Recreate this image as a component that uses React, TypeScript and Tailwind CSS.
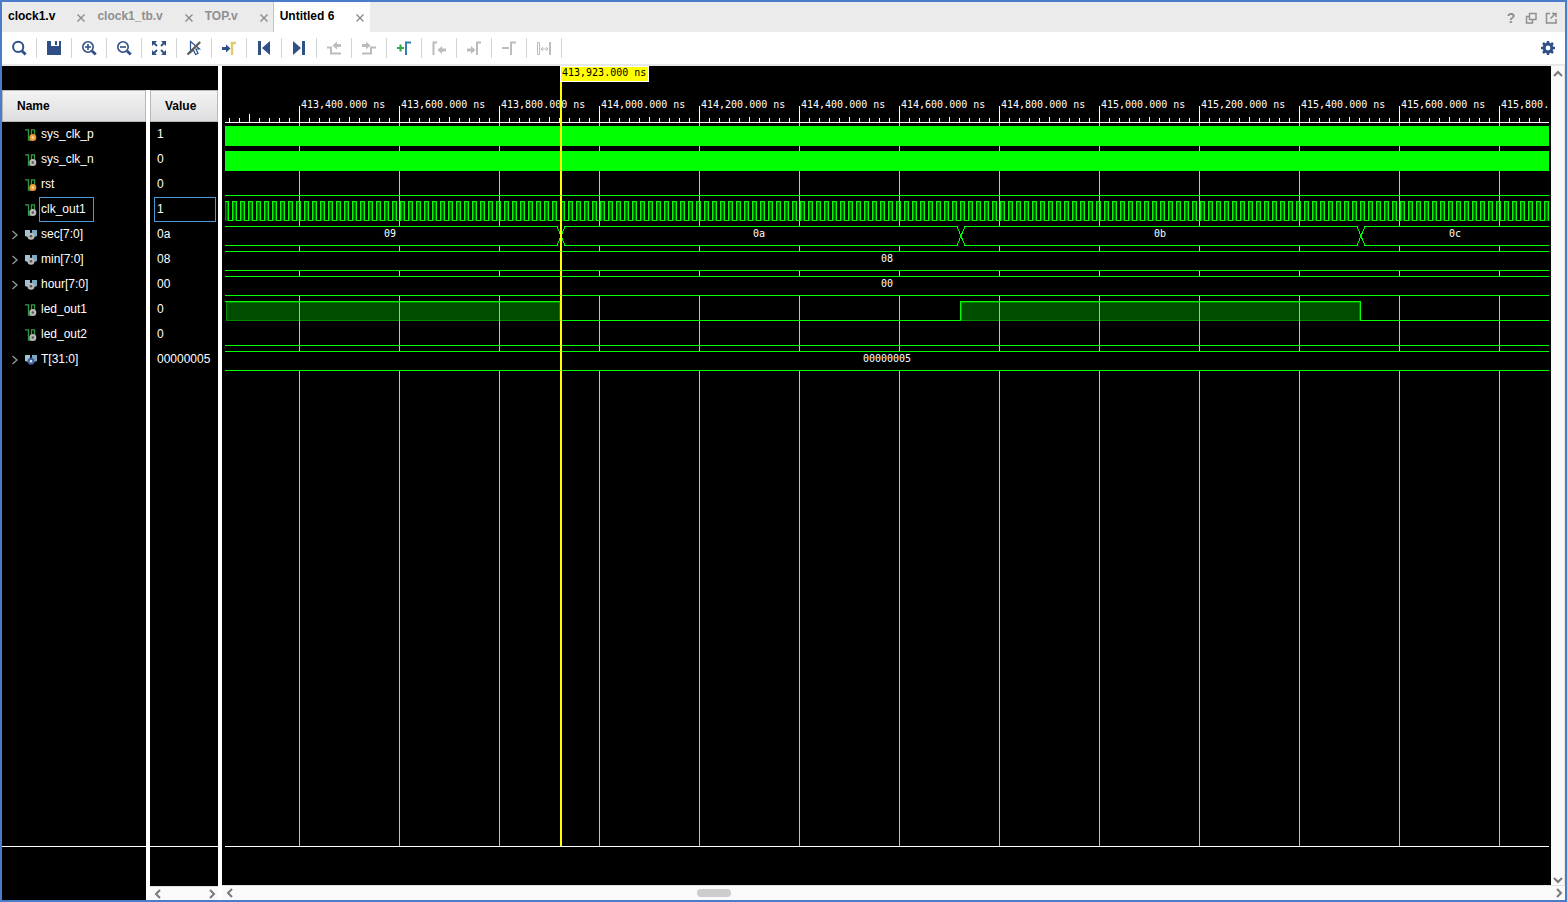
import React, { useState } from "react";
import clsx from "clsx";

const NAVY = "#2f4f86";
const MUTED = "#bcbcbc";
const GREEN = "#00ff00";

const TABS = ["clock1.v", "clock1_tb.v", "TOP.v", "Untitled 6"];

type Signal = {
  name: string;
  value: string;
  kind: "input" | "wire" | "bus" | "const";
};

const SIGNALS: Signal[] = [
  { name: "sys_clk_p", value: "1", kind: "input" },
  { name: "sys_clk_n", value: "0", kind: "wire" },
  { name: "rst", value: "0", kind: "input" },
  { name: "clk_out1", value: "1", kind: "wire" },
  { name: "sec[7:0]", value: "0a", kind: "bus" },
  { name: "min[7:0]", value: "08", kind: "bus" },
  { name: "hour[7:0]", value: "00", kind: "bus" },
  { name: "led_out1", value: "0", kind: "wire" },
  { name: "led_out2", value: "0", kind: "wire" },
  { name: "T[31:0]", value: "00000005", kind: "const" },
];

/* Arrow heads shared by the toolbar icons */
const arrowRight = (x: number, y: number) =>
  `M${x} ${y - 1.5}h4v-2.5l4.5 4l-4.5 4v-2.5h-4z`;
const arrowLeft = (x: number, y: number) =>
  `M${x} ${y - 1.5}h-4v-2.5l-4.5 4l4.5 4v-2.5h4z`;

const TOOLS: { label: string; disabled?: boolean; icon: React.ReactNode }[] = [
  {
    label: "Search",
    icon: (
      <g stroke={NAVY} fill="none">
        <circle cx="7.2" cy="6.9" r="5.1" strokeWidth="2" />
        <path d="M10.9 10.7L14.6 14.4" strokeWidth="2.8" />
      </g>
    ),
  },
  {
    label: "Save",
    icon: (
      <path d="M1 1h4v5h8v-5h2v14h-14zM9 1h2v4h-2z" fill={NAVY} />
    ),
  },
  {
    label: "Zoom In",
    icon: (
      <g stroke={NAVY} fill="none">
        <circle cx="7" cy="7" r="5.2" strokeWidth="1.6" />
        <path d="M4 7h6M7 4v6" strokeWidth="1.6" />
        <path d="M11 11L14.8 14.6" strokeWidth="2.8" />
      </g>
    ),
  },
  {
    label: "Zoom Out",
    icon: (
      <g stroke={NAVY} fill="none">
        <circle cx="7" cy="7" r="5.2" strokeWidth="1.6" />
        <path d="M4 7h6" strokeWidth="1.6" />
        <path d="M11 11L14.8 14.6" strokeWidth="2.8" />
      </g>
    ),
  },
  {
    label: "Zoom Fit",
    icon: (
      <g fill={NAVY} stroke={NAVY}>
        <path
          d="M1 1h5l-5 5zM15 1h-5l5 5zM1 15h5l-5 -5zM15 15h-5l5 -5z"
          stroke="none"
        />
        <path
          d="M2 2l4 4M14 2l-4 4M2 14l4 -4M14 14l-4 -4"
          strokeWidth="1.8"
        />
      </g>
    ),
  },
  {
    label: "Select Mode",
    icon: (
      <g fill="none">
        <path
          d="M4.5 1.5v11l3 -2.5l2 4.5l2.5 -1l-2 -4.5h3.5z"
          stroke={NAVY}
          strokeWidth="1.2"
        />
        <path d="M1.5 14.5L14.2 2" stroke="#595959" strokeWidth="2.2" />
      </g>
    ),
  },
  {
    label: "Go to Cursor",
    icon: (
      <>
        <path d={arrowRight(1, 8.5)} fill={NAVY} />
        <path d="M11 15V3H15" fill="none" stroke="#e3c968" strokeWidth="2.4" />
      </>
    ),
  },
  {
    label: "Go to Time 0",
    icon: <path d="M2 1h3v14h-3zM14 1v14l-8 -7z" fill={NAVY} />,
  },
  {
    label: "Go to Last Time",
    icon: <path d="M11 1h3v14h-3zM2 1v14l8 -7z" fill={NAVY} />,
  },
  {
    label: "Previous Transition",
    disabled: true,
    icon: (
      <>
        <path
          d="M1 7.5H5V13.5H15"
          fill="none"
          stroke={MUTED}
          strokeWidth="2"
        />
        <path d={arrowLeft(15, 5.5)} fill={MUTED} />
      </>
    ),
  },
  {
    label: "Next Transition",
    disabled: true,
    icon: (
      <>
        <path
          d="M1 13.5H10V7.5H15"
          fill="none"
          stroke={MUTED}
          strokeWidth="2"
        />
        <path d={arrowRight(1, 5.5)} fill={MUTED} />
      </>
    ),
  },
  {
    label: "Add Marker",
    icon: (
      <g fill="none" strokeWidth="2">
        <path d="M1 8h7M4.5 4.5v7" stroke="#35a845" />
        <path d="M10 15V2.5H15" stroke="#2e7fb5" />
      </g>
    ),
  },
  {
    label: "Previous Marker",
    disabled: true,
    icon: (
      <>
        <path d="M2.5 15V2.5H6" fill="none" stroke={MUTED} strokeWidth="2" />
        <path d={arrowLeft(15, 10)} fill={MUTED} />
      </>
    ),
  },
  {
    label: "Next Marker",
    disabled: true,
    icon: (
      <>
        <path d={arrowRight(1, 10)} fill={MUTED} />
        <path d="M11 15V2.5H15" fill="none" stroke={MUTED} strokeWidth="2" />
      </>
    ),
  },
  {
    label: "Remove Marker",
    disabled: true,
    icon: (
      <g fill="none" stroke={MUTED} strokeWidth="2">
        <path d="M1 8h7" />
        <path d="M10 15V2.5H15" />
      </g>
    ),
  },
  {
    label: "Swap Cursors",
    disabled: true,
    icon: (
      <g fill="none" stroke={MUTED}>
        <path d="M1.5 2.5h2v12h-2z" />
        <path d="M14 2v13" strokeWidth="2" />
        <path d="M5 9h7M7 7l-2 2l2 2M10 7l2 2l-2 2" />
      </g>
    ),
  },
];

function SignalIcon({ kind }: { kind: Signal["kind"] }) {
  const dot =
    kind === "input" ? "#f29a33" : kind === "const" ? "#3f5f9c" : "#b9b9b9";

  if (kind === "bus" || kind === "const") {
    return (
      <svg width="12" height="12" viewBox="0 0 12 12" className="shrink-0">
        <path d="M0 1h5v6l-2 1l-3 -1z" fill="#9cc3d8" />
        <path d="M12 1h-5v6l2 1l3 -1z" fill="#7fa9c2" />
        <circle cx="6" cy="7.2" r="3.5" fill={dot} />
        <circle cx="6" cy="7.2" r="1.3" fill={kind === "bus" ? "#555" : "#dfe6f2"} />
      </svg>
    );
  }
  return (
    <svg width="12" height="12" viewBox="0 0 12 12" className="shrink-0">
      <path
        d="M0 .8H3.5V11H6.5V.8H9.5V6"
        fill="none"
        stroke="#2f9a48"
        strokeWidth="1.3"
      />
      <circle cx="7.8" cy="8.5" r="3.5" fill={dot} />
      <circle
        cx="7.8"
        cy="8.5"
        r="1.2"
        fill={kind === "input" ? "#ffe0b0" : "#555"}
      />
    </svg>
  );
}

function Chevron({ d, color = "#7a7a7a" }: { d: string; color?: string }) {
  return (
    <svg width="10" height="10" viewBox="0 0 10 10">
      <path d={d} fill="none" stroke={color} strokeWidth="2" />
    </svg>
  );
}

const LEFT = "M7 1L3 5L7 9";
const RIGHT = "M3 1L7 5L3 9";
const UP = "M1 7L5 3L9 7";
const DOWN = "M1 3L5 7L9 3";

function TabBar() {
  const [active, setActive] = useState("Untitled 6");
  return (
    <div className="flex h-[30px] shrink-0 bg-[#ebebeb]">
      {TABS.map((tab) => (
        <div
          key={tab}
          className={clsx(
            "flex items-center pl-1.5 pr-1.5",
            tab === active && "bg-white shadow-[-1px_0_0_#c4c4c4]"
          )}
        >
          <button
            onClick={() => setActive(tab)}
            className={clsx(
              "pb-0.5 font-bold",
              tab === active || tab === "clock1.v"
                ? "text-black"
                : "text-[#8f8f8f]"
            )}
          >
            {tab}
          </button>
          <button aria-label={`Close ${tab}`} className="ml-[22px] pt-0.5">
            <svg width="8" height="8" viewBox="0 0 8 8">
              <path d="M.5 .5L7.5 7.5M7.5 .5L.5 7.5" stroke="#8a8a8a" strokeWidth="1.4" />
            </svg>
          </button>
        </div>
      ))}
      <div className="ml-auto flex items-center gap-2 pr-2 pt-0.5 text-[#8e8e8e]">
        <button aria-label="Help" className="w-3 text-sm font-bold">
          ?
        </button>
        <button aria-label="Restore">
          <svg width="12" height="12" viewBox="0 0 12 12" fill="none" stroke="currentColor">
            <path d="M4.5 1.5h6.5v6h-6.5zM4 4.5H1.5v6.5h6V8" strokeWidth="1.4" />
          </svg>
        </button>
        <button aria-label="Float">
          <svg width="12" height="12" viewBox="0 0 12 12" fill="none" stroke="currentColor">
            <path d="M5 1.5H1.5v9.5h9.5V7M5.5 6.5L10 2M7 1.5h4V5" strokeWidth="1.5" />
          </svg>
        </button>
      </div>
    </div>
  );
}

function Toolbar() {
  return (
    <div className="flex h-[34px] shrink-0 items-center border-b-2 border-[#e8e8e8] bg-white">
      {TOOLS.map((tool) => (
        <button
          key={tool.label}
          aria-label={tool.label}
          title={tool.label}
          disabled={tool.disabled}
          className="flex h-5 w-[35px] items-center justify-center border-r border-[#d4d4d4]"
        >
          <svg width="16" height="16" viewBox="0 0 16 16">
            {tool.icon}
          </svg>
        </button>
      ))}
      <button aria-label="Settings" className="ml-auto pr-2.5">
        <svg width="14" height="14" viewBox="0 0 14 14" fill="none" stroke={NAVY}>
          <circle cx="7" cy="7" r="3.9" strokeWidth="3" />
          <path
            d="M7 0v2.5M7 11.5V14M0 7h2.5M11.5 7H14M2 2l2 2M10 10l2 2M12 2l-2 2M4 10l-2 2"
            strokeWidth="2.6"
          />
        </svg>
      </button>
    </div>
  );
}

function SignalPane() {
  const [selected, setSelected] = useState("clk_out1");
  return (
    <div className="flex w-[216px] shrink-0 flex-col bg-black pt-6 text-white">
      <table className="w-full table-fixed border-separate border-spacing-0 text-left">
        <thead>
          <tr className="h-8 text-black">
            <th className="w-[144px] p-0">
              <div className="flex h-8 items-center border border-[#b8b8b8] bg-linear-to-b from-[#f3f3f3] to-[#dedee0] pl-3.5">
                Name
              </div>
            </th>
            <th className="bg-white p-0 pl-1">
              <div className="flex h-8 items-center border border-[#b8b8b8] bg-linear-to-b from-[#f3f3f3] to-[#dedee0] pl-3.5">
                Value
              </div>
            </th>
          </tr>
        </thead>
        <tbody>
          {SIGNALS.map((signal) => {
            const isBus = signal.kind === "bus" || signal.kind === "const";
            const box =
              signal.name === selected
                ? "border-[#4a9ad8]"
                : "border-transparent";
            return (
              <tr
                key={signal.name}
                className="h-[25px]"
                onClick={() => setSelected(signal.name)}
              >
                <td className="p-0">
                  <div className="flex items-center pl-2">
                    <span className="mr-[5px] flex w-2.5">
                      {isBus && (
                        <button aria-label={`Expand ${signal.name}`}>
                          <svg width="10" height="10" viewBox="0 0 10 10">
                            <path d="M2.5 1L7 5L2.5 9" fill="none" stroke="#9a9a9a" strokeWidth="1.3" />
                          </svg>
                        </button>
                      )}
                    </span>
                    <SignalIcon kind={signal.kind} />
                    <span
                      className={clsx(
                        "ml-0.5 flex h-[25px] items-center border pb-0.5 pl-px pr-[7px]",
                        box
                      )}
                    >
                      {signal.name}
                    </span>
                  </div>
                </td>
                <td className="border-l-4 border-white p-0">
                  <div
                    className={clsx(
                      "ml-1 mr-0.5 flex h-[25px] items-center border pb-0.5 pl-0.5",
                      box
                    )}
                  >
                    {signal.value}
                  </div>
                </td>
              </tr>
            );
          })}
        </tbody>
      </table>
      {/* Empty rows */}
      <div className="flex flex-1">
        <div className="w-[144px] border-b border-white" />
        <div className="w-1 bg-white" />
        <div className="flex-1 border-b border-white" />
      </div>
      <div className="flex h-[53px] shrink-0">
        <div className="w-[144px]" />
        <div className="flex flex-1 flex-col justify-end border-l-4 border-white">
          <div className="flex h-3.5 items-center justify-between border-t border-[#e0e0e0] bg-[#fafafa] pl-[3px] pr-px">
            <button aria-label="Scroll values left">
              <Chevron d={LEFT} />
            </button>
            <button aria-label="Scroll values right">
              <Chevron d={RIGHT} />
            </button>
          </div>
        </div>
      </div>
    </div>
  );
}

/* Ruler: 200 ns per 100 px, first label at x = 74 */
const RULER_Y = 56;
const MAJORS = Array.from({ length: 13 }, (_, i) => ({
  x: 74 + i * 100,
  label: `${(413400 + i * 200).toLocaleString("en-US")}.000 ns`,
}));
const MINORS = Array.from({ length: 132 }, (_, i) => 4 + i * 10);

/* A bus hides the grid lines between its rails */
function Bus({ y, value }: { y: number; value?: string }) {
  return (
    <>
      <rect x="0" y={y} width="100%" height="20" fill="#000" />
      <rect x="0" y={y} width="100%" height="1" fill={GREEN} />
      <rect x="0" y={y + 19} width="100%" height="1" fill={GREEN} />
      {value && (
        <text x="50%" y={y + 11} textAnchor="middle">
          {value}
        </text>
      )}
    </>
  );
}

function Pulse({ from, to, y }: { from: number; to: number; y: number }) {
  return (
    <>
      <rect x={from} y={y} width={to - from} height="20" fill={GREEN} fillOpacity="0.3" />
      <rect
        x={from + 0.5}
        y={y + 1.5}
        width={to - from - 1}
        height="18"
        fill="none"
        stroke={GREEN}
        strokeOpacity="0.35"
      />
    </>
  );
}

function Waveform() {
  return (
    <svg
      className="min-h-0 w-full flex-1 border-b border-white font-['DejaVu_Sans_Mono','Liberation_Mono',monospace] text-[10px]"
      fill="#fff"
      shapeRendering="crispEdges"
    >
      <defs>
        <pattern id="clk" x="7" y="135" width="8" height="20" patternUnits="userSpaceOnUse">
          <rect x="0" y="0" width="5" height="20" fill={GREEN} fillOpacity="0.3" />
          <path d="M1.5 1V19M3.5 1V19M1 1.5H4" stroke={GREEN} strokeOpacity="0.35" />
          <path d="M.5 20V.5H4.5V19.5H8" fill="none" stroke={GREEN} />
        </pattern>
      </defs>

      {/* Time ruler and grid */}
      {MAJORS.map(({ x, label }) => (
        <g key={x}>
          <rect x={x} y={RULER_Y} width="1" height="100%" fill="#c0c0c0" />
          <rect x={x} y="40" width="1" height="17" />
          <text x={x + 2} y="42">
            {label}
          </text>
        </g>
      ))}
      {MINORS.map((x) => (
        <rect key={x} x={x} y={x % 100 === 24 ? 51 : 52} width="1" height="5" />
      ))}
      <rect x="24" y="48" width="1" height="8" />
      <rect x="0" y={RULER_Y} width="100%" height="1" />

      {/* sys_clk_p, sys_clk_n, rst */}
      <rect x="0" y="60" width="100%" height="20" fill={GREEN} />
      <rect x="0" y="85" width="100%" height="20" fill={GREEN} />
      <rect x="0" y="129" width="100%" height="1" fill={GREEN} />

      {/* clk_out1 */}
      <rect x="0" y="135" width="100%" height="20" fill="url(#clk)" />

      {/* sec[7:0] */}
      <Bus y={160} />
      {[336, 736, 1136].map((x) => (
        <g key={x}>
          <rect x={x - 4} y="160" width="8" height="20" fill="#000" />
          <path
            d={`M${x - 5} 160.5h1L${x + 4} 179.5h1M${x - 5} 179.5h1L${x + 4} 160.5h1`}
            fill="none"
            stroke={GREEN}
          />
        </g>
      ))}
      <g textAnchor="middle">
        <text x="165" y="171">09</text>
        <text x="534" y="171">0a</text>
        <text x="935" y="171">0b</text>
        <text x="1230" y="171">0c</text>
      </g>

      {/* min[7:0], hour[7:0] */}
      <Bus y={185} value="08" />
      <Bus y={210} value="00" />

      {/* led_out1 */}
      <Pulse from={1} to={335} y={235} />
      <Pulse from={736} to={1135} y={235} />
      <path
        d="M0 235.5H335.5V254.5H735.5V235.5H1135.5V254.5H3000"
        fill="none"
        stroke={GREEN}
      />

      {/* led_out2, T[31:0] */}
      <rect x="0" y="279" width="100%" height="1" fill={GREEN} />
      <Bus y={285} value="00000005" />

      {/* Cursor */}
      <rect x="335" y="0" width="2" height="100%" fill="#ffff00" />
      <rect x="335.5" y=".5" width="88" height="15" fill="#ffff00" stroke="#fff" />
      <text x="337" y="10" fill="#000">
        413,923.000 ns
      </text>
    </svg>
  );
}

export default function App() {
  return (
    <div className="flex h-screen flex-col overflow-hidden border-2 border-[#4a7cc9] bg-white font-['Liberation_Sans',Arial,sans-serif] text-xs">
      <TabBar />
      <Toolbar />
      <div className="flex min-h-0 flex-1 gap-1">
        <SignalPane />
        <div className="flex min-w-0 flex-1 flex-col">
          <div className="flex min-h-0 flex-1">
            <div className="flex min-w-0 flex-1 flex-col bg-black pb-[38px] pl-[3px] pr-0.5">
              <Waveform />
            </div>
            <div className="flex w-3.5 shrink-0 flex-col items-center justify-between border-r border-[#e4e4e4] bg-[#fafafa] pt-[3px]">
              <button aria-label="Scroll up">
                <Chevron d={UP} />
              </button>
              <button aria-label="Scroll down">
                <Chevron d={DOWN} />
              </button>
            </div>
          </div>
          <div className="flex h-[15px] shrink-0 items-center border-t border-[#e0e0e0] bg-[#fafafa] pl-[3px] pr-px">
            <button aria-label="Scroll left">
              <Chevron d={LEFT} />
            </button>
            <div className="flex flex-1">
              <div className="w-[35%]" />
              <div className="h-2 w-[34px] rounded-full bg-[#cdcdcd]" />
            </div>
            <button aria-label="Scroll right">
              <Chevron d={RIGHT} />
            </button>
          </div>
        </div>
      </div>
    </div>
  );
}
